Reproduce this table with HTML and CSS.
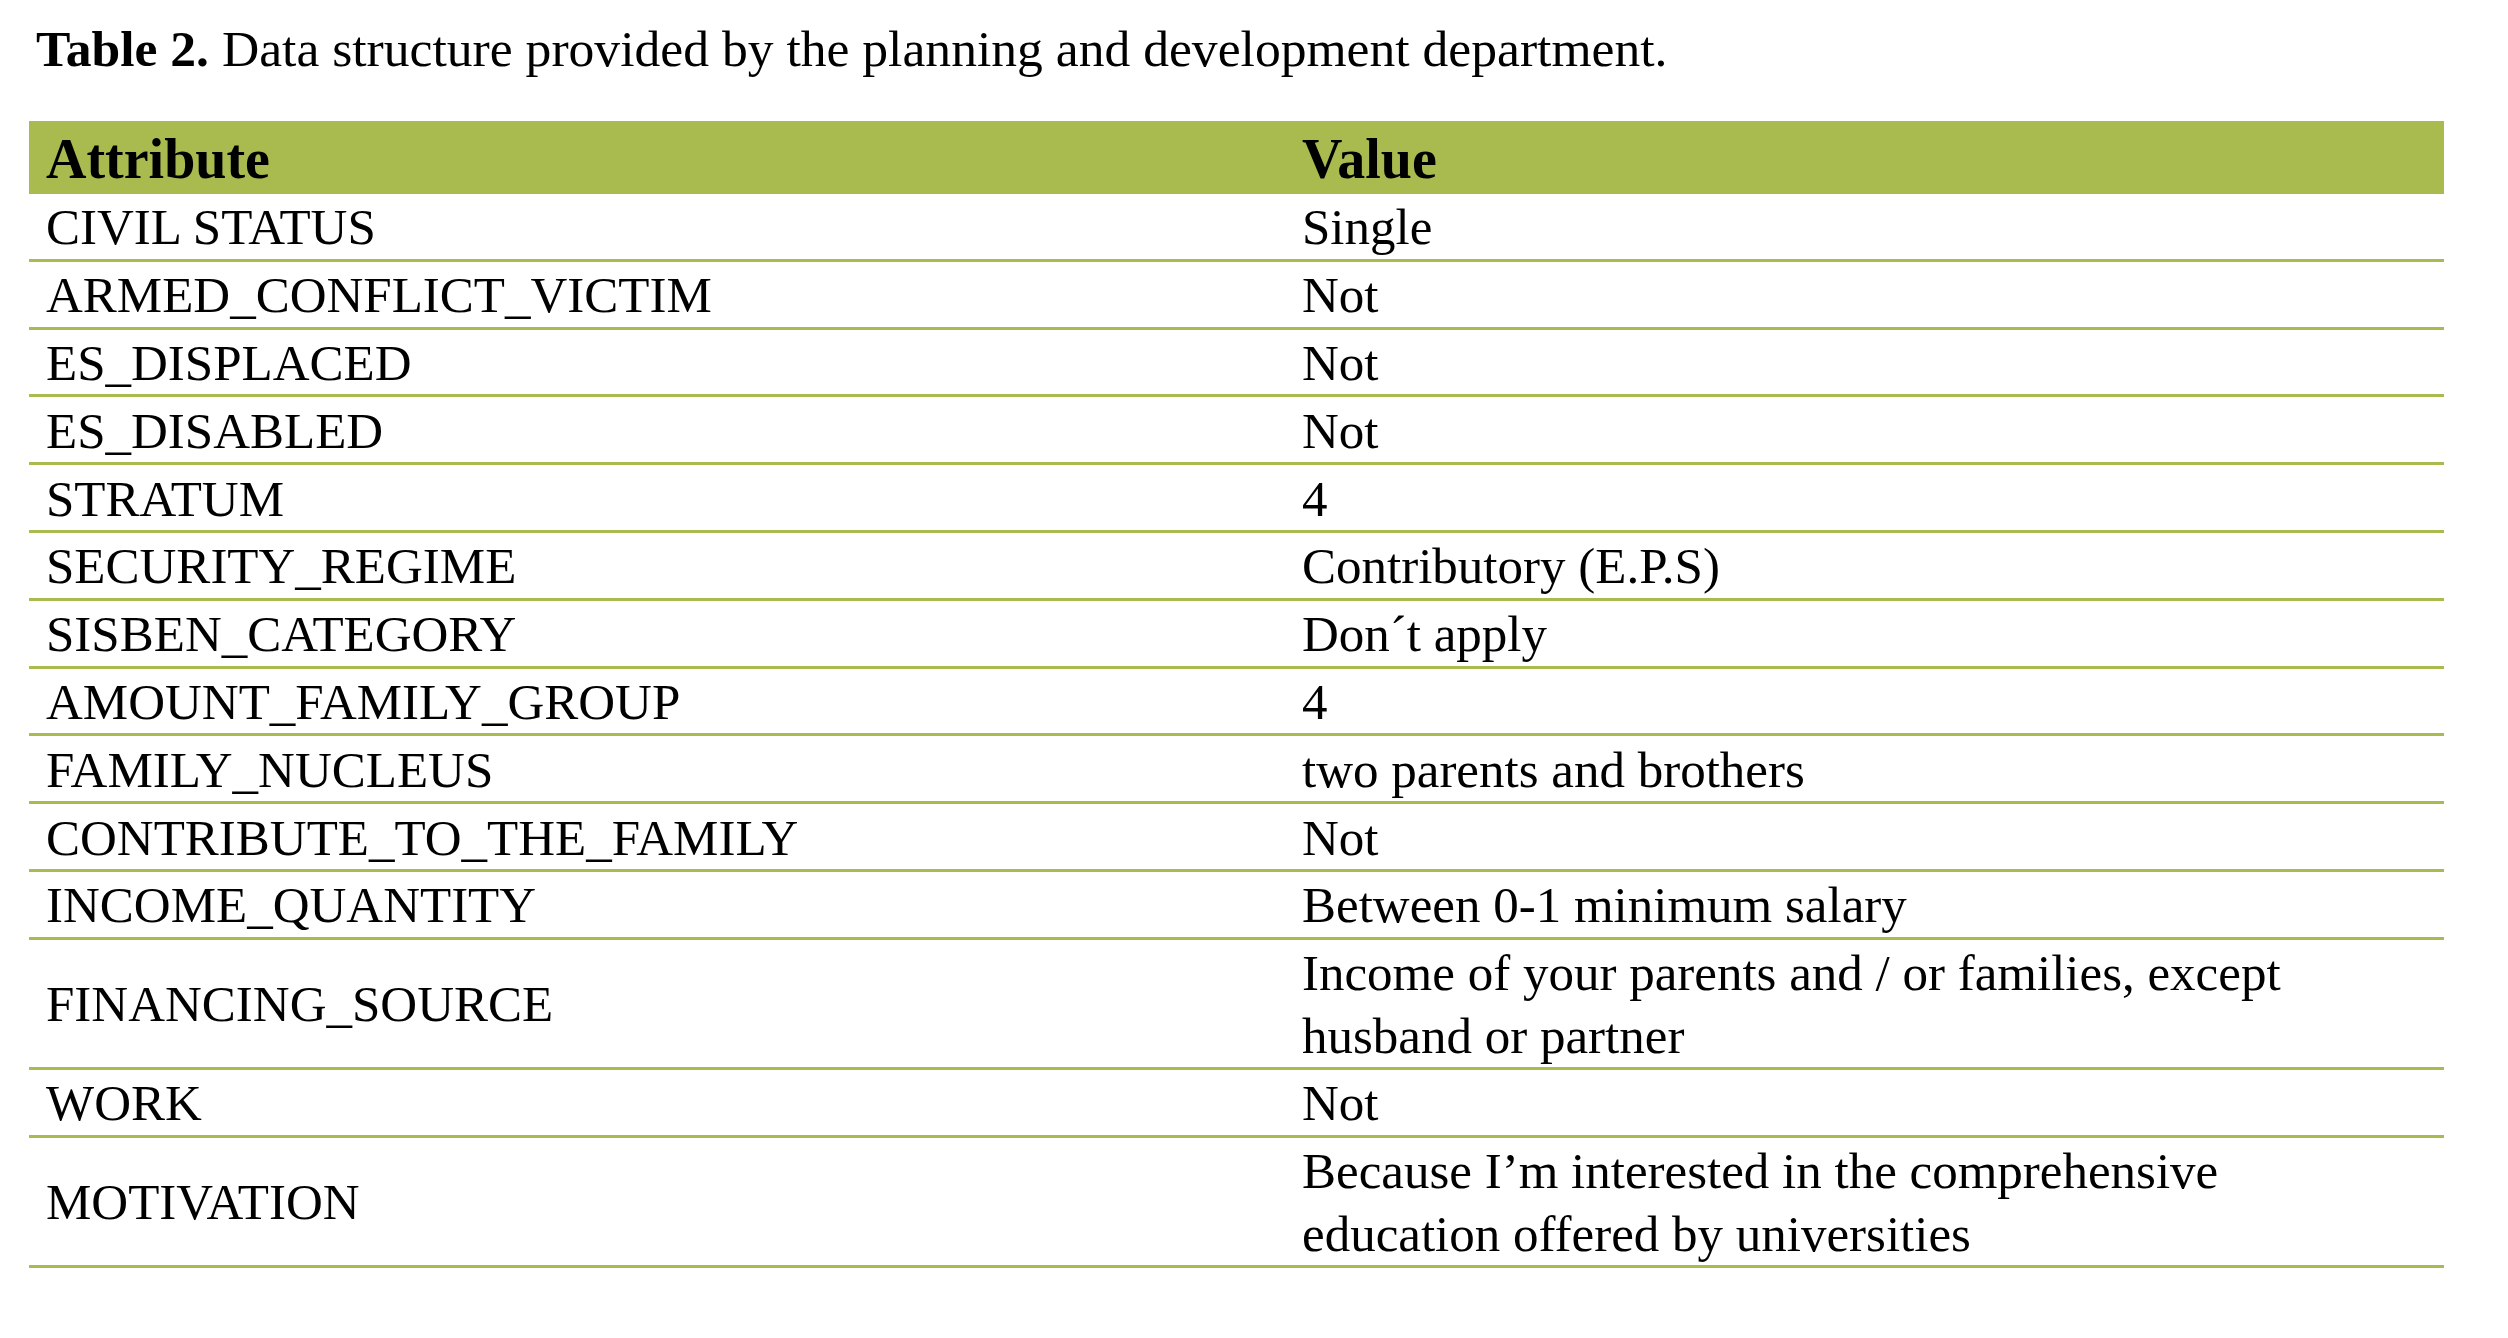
FILE: index.html
```html
<!DOCTYPE html>
<html lang="en">
<head>
<meta charset="utf-8">
<title>Table 2</title>
<link rel="stylesheet" href="styles.css">
</head>
<body>
<p class="caption"><b>Table 2.</b> Data structure provided by the planning and development department.</p>
<table class="data">
  <colgroup><col class="c-attr"><col class="c-val"></colgroup>
  <thead>
    <tr><th>Attribute</th><th>Value</th></tr>
  </thead>
  <tbody>
    <tr><td>CIVIL STATUS</td><td>Single</td></tr>
    <tr><td>ARMED_CONFLICT_VICTIM</td><td>Not</td></tr>
    <tr><td>ES_DISPLACED</td><td>Not</td></tr>
    <tr><td>ES_DISABLED</td><td>Not</td></tr>
    <tr><td>STRATUM</td><td>4</td></tr>
    <tr><td>SECURITY_REGIME</td><td>Contributory (E.P.S)</td></tr>
    <tr><td>SISBEN_CATEGORY</td><td>Don´t apply</td></tr>
    <tr><td>AMOUNT_FAMILY_GROUP</td><td>4</td></tr>
    <tr><td>FAMILY_NUCLEUS</td><td>two parents and brothers</td></tr>
    <tr><td>CONTRIBUTE_TO_THE_FAMILY</td><td>Not</td></tr>
    <tr><td>INCOME_QUANTITY</td><td>Between 0-1 minimum salary</td></tr>
    <tr><td>FINANCING_SOURCE</td><td>Income of your parents and / or families, except husband or partner</td></tr>
    <tr><td>WORK</td><td>Not</td></tr>
    <tr><td>MOTIVATION</td><td>Because I’m interested in the comprehensive education offered by universities</td></tr>
  </tbody>
</table>
</body>
</html>
```
FILE: styles.css
```css
html, body {
  margin: 0;
  padding: 0;
  background: #ffffff;
  color: #000000;
  font-family: "Liberation Serif", "Times New Roman", serif;
}

.caption {
  margin: 0;
  padding: 18px 0 0 36px;
  font-size: 51.6px;
  line-height: 62px;
}

.caption b {
  font-weight: bold;
}

.data {
  margin: 41px 0 0 29px;
  width: 2415px;
  border-collapse: collapse;
  table-layout: fixed;
}

.c-attr { width: 1256px; }
.c-val { width: 1159px; }

.data th {
  background: #a9bb4e;
  text-align: left;
  font-weight: bold;
  font-size: 56px;
  line-height: 62px;
  padding: 6.5px 17px 4.5px 17px;
}

.data td {
  font-size: 51px;
  line-height: 62.4px;
  padding: 2.4px 17px 0 17px;
  border-bottom: 3px solid #a9bb4e;
  vertical-align: middle;
}
```
